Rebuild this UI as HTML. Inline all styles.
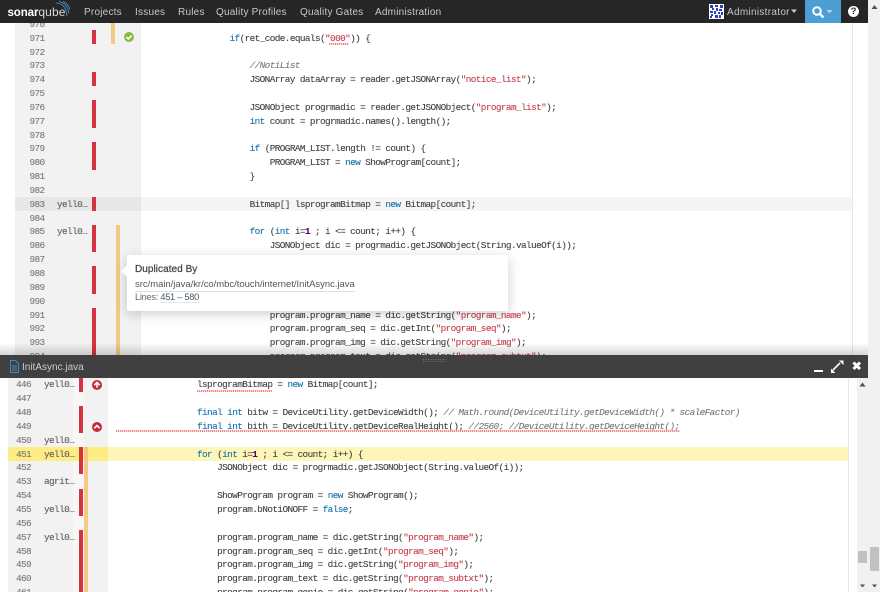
<!DOCTYPE html>
<html><head><meta charset="utf-8"><style>
html,body{margin:0;padding:0;width:880px;height:592px;overflow:hidden;background:#fff}
div,pre,span,svg{box-sizing:border-box}
.a{position:absolute}
pre{position:absolute;margin:0;font:9.4px/13.85px "Liberation Mono",monospace;letter-spacing:-.6px;color:#3f3f3f;white-space:pre;-webkit-text-stroke:.1px}
.n{color:#777}
.b{color:#5c5c5c}
.k{color:#1170aa}
.s{color:#c43d4b}
.c{color:#777;font-style:italic}
.p{color:#4b0082;font-weight:bold}
.r{position:absolute;background:#d4333f}
.o{position:absolute;background:#f4c986}
.nav{position:absolute;top:6px;font:10px/13px "Liberation Sans",sans-serif;letter-spacing:.22px;color:#c8c8c8;white-space:nowrap}
.sq{position:absolute;height:2px;background:repeating-linear-gradient(90deg,#ee8a90 0 1px,#fbd5d7 1px 2px)}
</style></head><body>
<div class="a" style="left:0;top:0;width:880px;height:592px;overflow:hidden">

<!-- top source viewer -->
<div class="a" style="left:0;top:23px;width:868px;height:332px;overflow:hidden;background:#fff">
 <div class="a" style="left:15px;top:0;width:126px;height:332px;background:#f2f2f2"></div>
 <div class="a" style="left:141px;top:174px;width:711px;height:14px;background:#f5f5f5"></div>
 <div class="a" style="left:15px;top:174px;width:126px;height:14px;background:#e7e7e7"></div>
 <div class="a" style="left:852px;top:0;width:1px;height:332px;background:#e6e6e6"></div>
 <div class="r" style="left:92px;top:7px;width:4px;height:14px"></div>
 <div class="r" style="left:92px;top:49px;width:4px;height:14px"></div>
 <div class="r" style="left:92px;top:77px;width:4px;height:28px"></div>
 <div class="r" style="left:92px;top:119px;width:4px;height:28px"></div>
 <div class="r" style="left:92px;top:174px;width:4px;height:14px"></div>
 <div class="r" style="left:92px;top:202px;width:4px;height:27px"></div>
 <div class="r" style="left:92px;top:243px;width:4px;height:28px"></div>
 <div class="r" style="left:92px;top:285px;width:4px;height:47px"></div>
 <div class="o" style="left:111px;top:0;width:4px;height:21px"></div>
 <div class="o" style="left:116px;top:202px;width:4px;height:130px"></div>
 <svg class="a" style="left:123px;top:8px" width="12" height="12" viewBox="0 0 12 12"><circle cx="6" cy="6" r="5" fill="#85bb43"/><path d="M3.4 6l1.900 2 3.300-3.400" fill="none" stroke="#fff" stroke-width="1.600"/></svg>
 <pre class="n" style="left:29.500px;top:-5.200px">970
971
972
973
974
975
976
977
978
979
980
981
982
983
984
985
986
987
988
989
990
991
992
993
994</pre>
 <pre class="b" style="left:57px;top:174.800px">yell0&#8230;

yell0&#8230;</pre>
 <pre style="left:229.500px;top:-5.200px">

<span class="k">if</span>(ret_code.equals(<span class="s">"000"</span>)) {

    <span class="c">//NotiList</span>
    JSONArray dataArray = reader.getJSONArray(<span class="s">"notice_list"</span>);

    JSONObject progrmadic = reader.getJSONObject(<span class="s">"program_list"</span>);
    <span class="k">int</span> count = progrmadic.names().length();

    <span class="k">if</span> (PROGRAM_LIST.length != count) {
        PROGRAM_LIST = <span class="k">new</span> ShowProgram[count];
    }

    Bitmap[] lsprogramBitmap = <span class="k">new</span> Bitmap[count];

    <span class="k">for</span> (<span class="k">int</span> i=<span class="p">1</span> ; i &lt;= count; i++) {
        JSONObject dic = progrmadic.getJSONObject(String.valueOf(i));




        program.program_name = dic.getString(<span class="s">"program_name"</span>);
        program.program_seq = dic.getInt(<span class="s">"program_seq"</span>);
        program.program_img = dic.getString(<span class="s">"program_img"</span>);
        program.program_text = dic.getString(<span class="s">"program_subtxt"</span>);</pre>
 <div class="sq" style="left:329px;top:20px;width:20px"></div>
 <div class="a" style="left:0;top:320px;width:868px;height:12px;background:linear-gradient(rgba(0,0,0,0),rgba(0,0,0,.16))"></div>
</div>

<!-- popup -->
<div class="a" style="left:127px;top:255px;width:381px;height:56px;background:#fff;border-radius:2px;box-shadow:0 3px 12px rgba(0,0,0,.2)">
 <div class="a" style="left:-4px;top:12px;width:8px;height:8px;background:#fff;transform:rotate(45deg)"></div>
 <div class="a" style="left:8px;top:8px;font:10px/13px 'Liberation Sans',sans-serif;color:#444;letter-spacing:.05px;-webkit-text-stroke:.25px #444;white-space:nowrap">Duplicated By</div>
 <div class="a" style="left:8px;top:24px;font:9.450px/12px 'Liberation Sans',sans-serif;color:#555;border-bottom:1px solid #cfe3f2;white-space:nowrap;height:13px">src/main/java/kr/co/mbc/touch/internet/InitAsync.java</div>
 <div class="a" style="left:8px;top:36px;font:9.200px/12px 'Liberation Sans',sans-serif;color:#666;white-space:nowrap;letter-spacing:-.25px">Lines: <span style="border-bottom:1px solid #d8e8f4;color:#555">451 &#8211; 580</span></div>
</div>

<!-- bottom source viewer -->
<div class="a" style="left:0;top:378px;width:857px;height:214px;overflow:hidden;background:#fff">
 <div class="a" style="left:8px;top:0;width:100px;height:214px;background:#f2f2f2"></div>
 <div class="a" style="left:73px;top:0;width:11px;height:214px;background:#f7f7f7"></div>
 <div class="a" style="left:108px;top:69px;width:740px;height:14px;background:#fdf6b8"></div>
 <div class="a" style="left:8px;top:69px;width:100px;height:14px;background:#feed85"></div>
 <div class="a" style="left:848px;top:0;width:1px;height:214px;background:#e6e6e6"></div>
 <div class="r" style="left:79px;top:0;width:4px;height:14px"></div>
 <div class="r" style="left:79px;top:28px;width:4px;height:27px"></div>
 <div class="r" style="left:79px;top:69px;width:4px;height:27px"></div>
 <div class="r" style="left:79px;top:111px;width:4px;height:27px"></div>
 <div class="r" style="left:79px;top:152px;width:4px;height:62px"></div>
 <div class="o" style="left:84px;top:69px;width:4px;height:145px"></div>
 <svg class="a" style="left:91px;top:1px" width="12" height="12" viewBox="0 0 12 12"><circle cx="6" cy="6" r="5" fill="#c8293a"/><path d="M3.300 6.200L6 3.400l2.700 2.800M6 3.800v5" fill="none" stroke="#fff" stroke-width="1.600"/></svg>
 <svg class="a" style="left:91px;top:43px" width="12" height="12" viewBox="0 0 12 12"><circle cx="6" cy="6" r="5" fill="#c8293a"/><path d="M3.300 7.200L6 4.600l2.700 2.600" fill="none" stroke="#fff" stroke-width="1.700"/></svg>
 <pre class="n" style="left:16px;top:.4px">446
447
448
449
450
451
452
453
454
455
456
457
458
459
460
461</pre>
 <pre class="b" style="left:44px;top:.4px">yell0&#8230;



yell0&#8230;
yell0&#8230;

agrit&#8230;

yell0&#8230;

yell0&#8230;</pre>
 <pre style="left:197px;top:.4px">lsprogramBitmap = <span class="k">new</span> Bitmap[count];

<span class="k">final</span> <span class="k">int</span> bitw = DeviceUtility.getDeviceWidth(); <span class="c">// Math.round(DeviceUtility.getDeviceWidth() * scaleFactor)</span>
<span class="k">final</span> <span class="k">int</span> bith = DeviceUtility.getDeviceRealHeight(); <span class="c">//2560; //DeviceUtility.getDeviceHeight();</span>

<span class="k">for</span> (<span class="k">int</span> i=<span class="p">1</span> ; i &lt;= count; i++) {
    JSONObject dic = progrmadic.getJSONObject(String.valueOf(i));

    ShowProgram program = <span class="k">new</span> ShowProgram();
    program.bNotiONOFF = <span class="k">false</span>;

    program.program_name = dic.getString(<span class="s">"program_name"</span>);
    program.program_seq = dic.getInt(<span class="s">"program_seq"</span>);
    program.program_img = dic.getString(<span class="s">"program_img"</span>);
    program.program_text = dic.getString(<span class="s">"program_subtxt"</span>);
    program.program_genie = dic.getString(<span class="s">"program_genie"</span>);</pre>
 <div class="sq" style="left:197px;top:12px;width:75px"></div>
 <div class="sq" style="left:116px;top:52px;width:564px"></div>
</div>

<!-- scrollbars -->
<div class="a" style="left:868px;top:0;width:12px;height:592px;background:#f1f1f1"></div>
<div class="a" style="left:857px;top:378px;width:11px;height:214px;background:#f1f1f1"></div>
<svg class="a" style="left:857px;top:0" width="23" height="592" viewBox="0 0 23 592">
 <path d="M14.500 9l3-4 3 4z" fill="#505050"/>
 <path d="M2.500 386.500l3-4 3 4z" fill="#505050"/>
 <path d="M3 584.500h5l-2.500 3z" fill="#505050"/><path d="M15 584.500h5l-2.500 3z" fill="#505050"/>
 <rect x="1" y="551" width="9" height="12" fill="#c1c1c1"/>
 <rect x="13" y="547" width="9" height="24" fill="#c1c1c1"/>
</svg>

<!-- bottom panel header -->
<div class="a" style="left:0;top:355px;width:868px;height:23px;background:#404040">
 <svg class="a" style="left:10px;top:5px" width="9" height="13" viewBox="0 0 9 13"><path d="M.5.500h5l3 3v9h-8zM2 6h5M2 8h5M2 10h5" fill="none" stroke="#3c8dc4"/></svg>
 <div class="a" style="left:22px;top:6px;font:10px/13px 'Liberation Sans',sans-serif;color:#c8ced2;white-space:nowrap">InitAsync.java</div>
 <svg class="a" style="left:423px;top:4px" width="24" height="4"><path d="M0 .5h23M0 2.500h23" stroke="#777" stroke-dasharray="1 1.500"/></svg>
 <svg class="a" style="left:812px;top:4px" width="52" height="16" viewBox="0 0 52 16">
  <rect x="2" y="11" width="9" height="2" fill="#fff"/>
  <path d="M21 11l7-7" stroke="#fff" stroke-width="1.600"/><path d="M27 1.500h4.500V6zM19 14h4.500L19 9.500z" fill="#fff"/>
  <path d="M41.500 3.500l6.500 6.500M48 3.500l-6.500 6.500" stroke="#fff" stroke-width="3"/>
 </svg>
</div>

<!-- navbar -->
<div class="a" style="left:0;top:0;width:868px;height:23px;background:#262626">
 <div class="a" style="left:7.500px;top:4.500px;font:bold 11.500px/14px 'Liberation Sans',sans-serif;color:#fff;letter-spacing:-.1px">sonar<span style="font-weight:normal;color:#d8d8d8;font-size:12px;letter-spacing:.15px">qube</span></div>
 <svg class="a" style="left:55px;top:1px" width="17" height="16" viewBox="0 0 17 16"><path d="M1 2c6 0 10 4 11 13M4 .5c5 1 9 5 10 12M8 .5c3 1 6 4 7 8" fill="none" stroke="#4b9fd5" stroke-width=".8"/></svg>
 <div class="nav" style="left:84px">Projects</div>
 <div class="nav" style="left:135px">Issues</div>
 <div class="nav" style="left:178px">Rules</div>
 <div class="nav" style="left:216px">Quality Profiles</div>
 <div class="nav" style="left:300px">Quality Gates</div>
 <div class="nav" style="left:375px">Administration</div>
 <svg class="a" style="left:709px;top:4px" width="15" height="15" viewBox="0 0 15 15"><rect width="15" height="15" fill="#fff"/><path d="M1 1h3v3H1zM6 1h3v2H6zM11 1h3v3h-3zM3 4h2v2H3zM7 4h2v3H7zM10 5h3v2h-3zM1 7h3v2H1zM5 7h2v3H5zM9 8h2v2H9zM12 8h2v3h-2zM2 10h2v2H2zM6 11h3v3H6zM10 11h2v3h-2zM1 12h2v2H1z" fill="#2a3fc0"/></svg>
 <div class="nav" style="left:727px;letter-spacing:.3px">Administrator</div>
 <svg class="a" style="left:790px;top:9px" width="8" height="5"><path d="M1 .500h6L4 4z" fill="#c8c8c8"/></svg>
 <div class="a" style="left:804.500px;top:0;width:36px;height:23px;background:#4b9fd5"></div>
 <svg class="a" style="left:811px;top:5px" width="14" height="14" viewBox="0 0 14 14"><circle cx="6" cy="6" r="3.800" fill="none" stroke="#fff" stroke-width="2"/><path d="M9 9l3.500 3.500" stroke="#fff" stroke-width="2.400"/></svg>
 <svg class="a" style="left:826px;top:10px" width="7" height="4"><path d="M.5 0h6L3.500 3.500z" fill="#b5d5ea"/></svg>
 <div class="a" style="left:848px;top:6px;width:11px;height:11px;border-radius:50%;background:#fff;color:#262626;font:bold 9.500px/11px 'Liberation Sans',sans-serif;text-align:center">?</div>
</div>
</div>
</body></html>
